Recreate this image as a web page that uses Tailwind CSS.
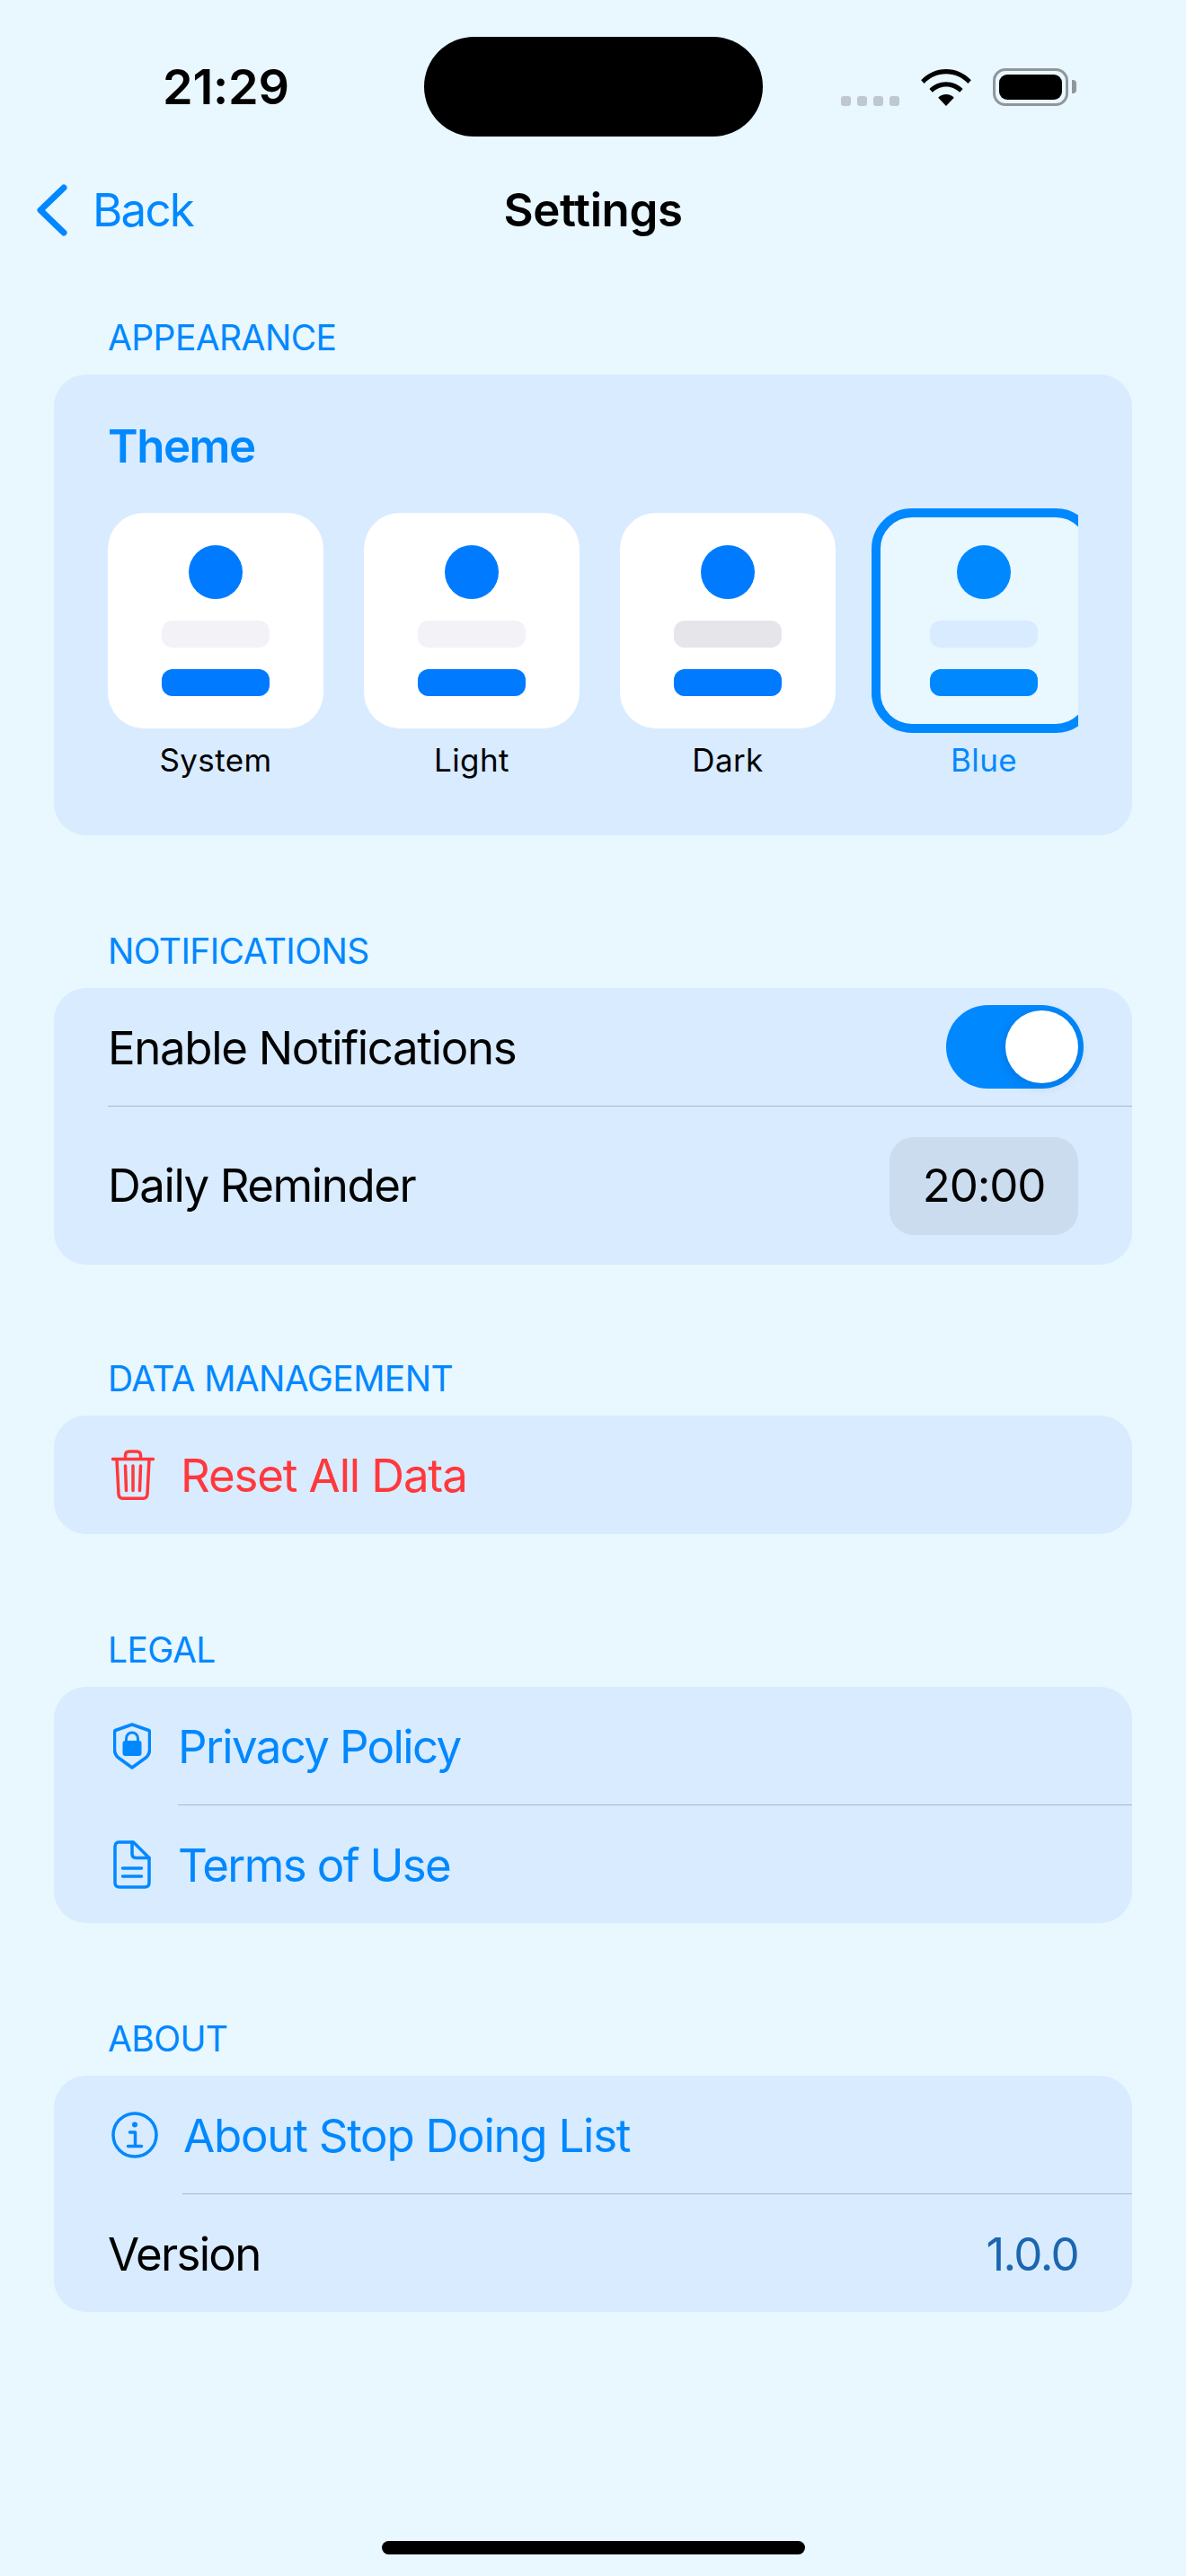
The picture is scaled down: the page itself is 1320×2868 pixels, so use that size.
<!DOCTYPE html>
<html lang="en">
<head>
    <meta charset="UTF-8">
    <meta name="viewport" content="width=device-width, initial-scale=1.0">
    <title>Settings</title>
    <script src="https://cdn.jsdelivr.net/npm/@tailwindcss/browser@4"></script>
</head>
<body class="bg-[#e9f7ff]">
    <div class="relative w-[1320px] h-[2868px] overflow-hidden bg-[#e9f7ff] font-['Inter',sans-serif] text-black">

        <!-- Dynamic island -->
        <div class="absolute left-[472px] top-[41px] w-[377px] h-[111px] rounded-full bg-black"></div>

        <!-- Status bar -->
        <div class="flex items-center justify-between h-[152px] pt-[41px] pl-[181px] pr-[131px]">
            <span class="text-[54px] leading-[60px] font-semibold tracking-[-0.2px]">21:29</span>
            <div class="flex items-center">
                <div class="flex gap-[7px] mt-[31px] mr-[23px]">
                    <span class="w-[11px] h-[11px] rounded-[3px] bg-[#bfc7d0]"></span>
                    <span class="w-[11px] h-[11px] rounded-[3px] bg-[#bfc7d0]"></span>
                    <span class="w-[11px] h-[11px] rounded-[3px] bg-[#bfc7d0]"></span>
                    <span class="w-[11px] h-[11px] rounded-[3px] bg-[#bfc7d0]"></span>
                </div>
                <svg class="mr-[23px]" width="58" height="42" viewBox="0 0 58 43">
                    <path d="M0.5 13.5C8 5.5 18 1 29 1s21 4.5 28.5 12.5L54 17.5C47.5 10.5 38.5 6.5 29 6.5S10.5 10.5 4 17.5z"/>
                    <path d="M10 23.5C14.8 18.5 21.5 15.5 29 15.5s14.2 3 19 8L44.5 27.5C40.5 23.5 35 21 29 21s-11.5 2.5-15.5 6.5z"/>
                    <path d="M20 33.5C22.3 31.2 25.5 29.8 29 29.8s6.7 1.4 9 3.7L29 43z"/>
                </svg>
                <div class="relative w-[84px] h-[42px] rounded-[14px] border-[3px] border-[#8f969c] p-[4px]">
                    <div class="w-full h-full rounded-[9px] bg-black"></div>
                    <div class="absolute -right-[12px] top-[10px] w-[5px] h-[15px] rounded-r-[4px] bg-[#8f969c]"></div>
                </div>
            </div>
        </div>

        <!-- Nav bar -->
        <div class="relative flex items-center h-[84px] mt-[40px] pl-[40px]">
            <svg width="36" height="58" viewBox="0 0 36 58" fill="none" stroke="#0088ff" stroke-width="7" stroke-linecap="round" stroke-linejoin="round">
                <path d="M31 4L5 29l26 25"/>
            </svg>
            <span class="ml-[27px] text-[51px] leading-[60px] tracking-[-1.8px] text-[#0088ff]">Back</span>
            <span class="absolute left-0 right-0 text-center text-[51px] leading-[60px] font-semibold tracking-[-0.4px]">Settings</span>
        </div>

        <div class="px-[60px] pt-[79px]">

            <!-- Appearance -->
            <section>
                <h2 class="h-[40px] leading-[41px] mb-[22px] pl-[60px] text-[39px] tracking-[-0.6px] text-[#0088ff]">APPEARANCE</h2>
                <div class="h-[513px] rounded-[36px] bg-[#d8ebff] pl-[60px] pt-[48px]">
                    <div class="h-[60px] leading-[63px] text-[51px] font-semibold tracking-[-1.5px] text-[#0088ff]">Theme</div>
                    <div class="w-[1080px] mt-[36px] pt-[10px] pb-[10px] overflow-hidden">
                        <div class="flex gap-[45px]">
                            <div class="w-[240px] shrink-0">
                                <div class="flex flex-col items-center gap-[24px] h-[240px] rounded-[40px] bg-white pt-[36px]">
                                    <div class="w-[60px] h-[60px] rounded-full bg-[#007aff]"></div>
                                    <div class="w-[120px] h-[30px] rounded-[12px] bg-[#f2f2f7]"></div>
                                    <div class="w-[120px] h-[30px] rounded-[12px] bg-[#007aff]"></div>
                                </div>
                                <div class="mt-[13px] h-[44px] leading-[44px] text-center text-[35px] tracking-[0.4px]">System</div>
                            </div>
                            <div class="w-[240px] shrink-0">
                                <div class="flex flex-col items-center gap-[24px] h-[240px] rounded-[40px] bg-white pt-[36px]">
                                    <div class="w-[60px] h-[60px] rounded-full bg-[#007aff]"></div>
                                    <div class="w-[120px] h-[30px] rounded-[12px] bg-[#f2f2f7]"></div>
                                    <div class="w-[120px] h-[30px] rounded-[12px] bg-[#007aff]"></div>
                                </div>
                                <div class="mt-[13px] h-[44px] leading-[44px] text-center text-[35px] tracking-[0.4px]">Light</div>
                            </div>
                            <div class="w-[240px] shrink-0">
                                <div class="flex flex-col items-center gap-[24px] h-[240px] rounded-[40px] bg-white pt-[36px]">
                                    <div class="w-[60px] h-[60px] rounded-full bg-[#007aff]"></div>
                                    <div class="w-[120px] h-[30px] rounded-[12px] bg-[#e5e5ea]"></div>
                                    <div class="w-[120px] h-[30px] rounded-[12px] bg-[#007aff]"></div>
                                </div>
                                <div class="mt-[13px] h-[44px] leading-[44px] text-center text-[35px] tracking-[0.4px]">Dark</div>
                            </div>
                            <div class="w-[240px] shrink-0">
                                <div class="relative flex flex-col items-center gap-[24px] h-[240px] rounded-[40px] bg-[#e9f7ff] pt-[36px]">
                                    <div class="absolute -inset-[5px] rounded-[45px] border-[10px] border-[#0088ff]"></div>
                                    <div class="w-[60px] h-[60px] rounded-full bg-[#0088ff]"></div>
                                    <div class="w-[120px] h-[30px] rounded-[12px] bg-[#d8ebff]"></div>
                                    <div class="w-[120px] h-[30px] rounded-[12px] bg-[#0088ff]"></div>
                                </div>
                                <div class="mt-[13px] h-[44px] leading-[44px] text-center text-[35px] tracking-[0.4px] text-[#0088ff]">Blue</div>
                            </div>
                        </div>
                    </div>
                </div>
            </section>

            <!-- Notifications -->
            <section class="mt-[108px]">
                <h2 class="h-[40px] leading-[41px] mb-[22px] pl-[60px] text-[39px] tracking-[-0.6px] text-[#0088ff]">NOTIFICATIONS</h2>
                <div class="rounded-[36px] bg-[#d8ebff]">
                    <div class="flex items-center justify-between h-[131px] pl-[60px] pr-[54px]">
                        <span class="pt-[3px] text-[51px] tracking-[-1.35px]">Enable Notifications</span>
                        <div class="flex justify-end w-[153px] h-[93px] rounded-full bg-[#0088ff] p-[6px]">
                            <div class="w-[81px] h-[81px] rounded-full bg-white shadow-[0_3px_14px_rgba(0,0,0,0.14)]"></div>
                        </div>
                    </div>
                    <div class="h-[1px] ml-[60px] bg-[#a9b9cf]"></div>
                    <div class="flex items-center justify-between h-[176px] pl-[60px] pr-[60px]">
                        <span class="pt-[1px] text-[51px] tracking-[-1.45px]">Daily Reminder</span>
                        <div class="flex items-center justify-center w-[210px] h-[109px] rounded-[27px] bg-[#cbdcee] text-[51px] tracking-[-1.2px]">20:00</div>
                    </div>
                </div>
            </section>

            <!-- Data management -->
            <section class="mt-[106px]">
                <h2 class="h-[40px] leading-[41px] mb-[22px] pl-[60px] text-[39px] tracking-[-0.6px] text-[#0088ff]">DATA MANAGEMENT</h2>
                <div class="flex items-center h-[132px] rounded-[36px] bg-[#d8ebff] pl-[64px]">
                    <svg class="mr-[29px]" width="48" height="56" viewBox="0 0 48 56" fill="none" stroke="#ff383c" stroke-width="3.5" stroke-linecap="round" stroke-linejoin="round">
                        <path d="M1.5 10.5h45"/>
                        <path d="M15.5 10V6.5c0-3 1.8-4.5 4.5-4.5h8c2.7 0 4.5 1.5 4.5 4.5V10"/>
                        <path d="M6 11l2 38.5c.2 3.3 2 4.8 5 4.8h22c3 0 4.8-1.5 5-4.8l2-38.5"/>
                        <path d="M15.5 18l1 27.5M24 18v27.5M32.5 18l-1 27.5"/>
                    </svg>
                    <span class="pt-[3px] text-[51px] tracking-[-1.15px] text-[#ff383c]">Reset All Data</span>
                </div>
            </section>

            <!-- Legal -->
            <section class="mt-[108px]">
                <h2 class="h-[40px] leading-[41px] mb-[22px] pl-[60px] text-[39px] tracking-[-0.6px] text-[#0088ff]">LEGAL</h2>
                <div class="rounded-[36px] bg-[#d8ebff]">
                    <div class="flex items-center h-[131px] pl-[66px]">
                        <svg class="mr-[30px]" width="42" height="52" viewBox="0 0 42 52" fill="none">
                            <path d="M21 2L39.5 8.5c.6.2 1 .8 1 1.5v20c0 4-1.6 7-5 9.5L21 50 6.500 39.500c-3.400-2.500-5-5.500-5-9.500V10c0-.7.4-1.300 1-1.500z" stroke="#0088ff" stroke-width="3.5" stroke-linejoin="round"/>
                            <path d="M14.500 21v-3.500a6.500 6.500 0 0 1 13 0V21" stroke="#0088ff" stroke-width="3"/>
                            <rect x="10.5" y="20" width="21" height="17" rx="3" fill="#0088ff"/>
                        </svg>
                        <span class="pt-[3px] text-[51px] tracking-[-1.65px] text-[#0088ff]">Privacy Policy</span>
                    </div>
                    <div class="h-[1px] ml-[138px] bg-[#a9b9cf]"></div>
                    <div class="flex items-center h-[131px] pl-[66px]">
                        <svg class="mr-[30px]" width="42" height="54" viewBox="0 0 42 54" fill="none" stroke="#0088ff" stroke-width="3.5" stroke-linecap="round" stroke-linejoin="round">
                            <path d="M6 2h16.500L40 19.500V47c0 3.300-1.700 5-5 5H7c-3.300 0-5-1.700-5-5V7c0-3.300 1.700-5 4-5z"/>
                            <path d="M21 2v13c0 3 1.500 4.500 4.500 4.500H40"/>
                            <path d="M10.500 31h21M10.500 40h21"/>
                        </svg>
                        <span class="pt-[3px] text-[51px] tracking-[-1.65px] text-[#0088ff]">Terms of Use</span>
                    </div>
                </div>
            </section>

            <!-- About -->
            <section class="mt-[108px]">
                <h2 class="h-[40px] leading-[41px] mb-[22px] pl-[60px] text-[39px] tracking-[-0.6px] text-[#0088ff]">ABOUT</h2>
                <div class="rounded-[36px] bg-[#d8ebff]">
                    <div class="flex items-center h-[131px] pl-[64px]">
                        <svg class="mr-[28px]" width="52" height="52" viewBox="0 0 52 52" fill="none" stroke="#0088ff" stroke-linecap="round" stroke-linejoin="round">
                            <circle cx="26" cy="26" r="24" stroke-width="3.5"/>
                            <circle cx="26" cy="14.5" r="3" fill="#0088ff" stroke="none"/>
                            <path d="M20.5 23H26.5v15M18.500 38.500h15" stroke-width="3.5"/>
                        </svg>
                        <span class="pt-[3px] text-[51px] tracking-[-1.25px] text-[#0088ff]">About Stop Doing List</span>
                    </div>
                    <div class="h-[1px] ml-[143px] bg-[#a9b9cf]"></div>
                    <div class="flex items-center justify-between h-[131px] px-[60px]">
                        <span class="pt-[3px] text-[51px] tracking-[-1.7px]">Version</span>
                        <span class="pt-[3px] text-[51px] tracking-[-1.6px] text-[#1b66b0]">1.0.0</span>
                    </div>
                </div>
            </section>
        </div>

        <!-- Home indicator -->
        <div class="absolute left-[425px] top-[2829px] w-[471px] h-[15px] rounded-full bg-black"></div>
    </div>
</body>
</html>
